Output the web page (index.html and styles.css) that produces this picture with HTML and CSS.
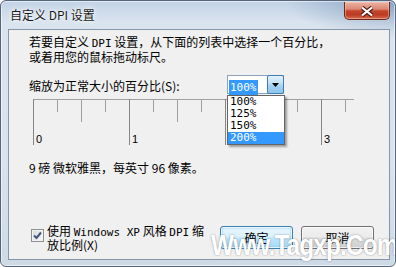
FILE: index.html
```html
<!DOCTYPE html>
<html lang="zh-CN">
<head>
    <meta charset="UTF-8">
    <meta name="viewport" content="width=device-width, initial-scale=1.0">
    <title>自定义 DPI 设置</title>
    <link rel="stylesheet" href="styles.css">
</head>
<body>

    <div class="window">
        <div class="titlebar">
            <span class="title">自定义 DPI 设置</span>
            <button class="close" aria-label="关闭">
                <svg class="close-x" viewBox="0 0 14 11" width="14" height="11">
                    <path class="x-edge" d="M2 1.5 L12 9.5 M12 1.5 L2 9.5"/>
                    <path class="x-fill" d="M2 1.5 L12 9.5 M12 1.5 L2 9.5"/>
                </svg>
            </button>
        </div>

        <div class="client">
            <p class="intro">若要自定义 <span class="en">DPI</span> 设置，从下面的列表中选择一个百分比，<br>或着用您的鼠标拖动标尺。</p>

            <div class="scale-row">
                <label class="scale-label">缩放为正常大小的百分比(S):</label>
                <div class="combo">
                    <span class="combo-value"><span class="sel">100%</span></span>
                    <span class="combo-btn">
                        <svg viewBox="0 0 7 4" width="7" height="4"><path d="M0 0 H7 L3.5 4 Z"/></svg>
                    </span>
                    <ul class="combo-list">
                        <li>100%</li>
                        <li>125%</li>
                        <li>150%</li>
                        <li class="active">200%</li>
                    </ul>
                </div>
            </div>

            <!-- ruler: 96px per inch, minor tick every 24px; "2" sits under the open list -->
            <svg class="ruler" width="322" height="46" viewBox="0 0 322 46">
                <g class="ruler-lines">
                    <path d="M0 0.5 H321"/>
                    <path class="major" d="M0.5 0 V46 M96.5 0 V46 M192.5 0 V46 M288.5 0 V46"/>
                    <path d="M48.5 0 V23 M144.5 0 V23 M240.5 0 V23"/>
                    <path d="M24.5 0 V13 M72.5 0 V13 M120.5 0 V13 M168.5 0 V13 M216.5 0 V13 M264.5 0 V13 M312.5 0 V13"/>
                </g>
                <g class="ruler-nums">
                    <text x="3" y="44">0</text>
                    <text x="99" y="44">1</text>
                    <text x="291" y="44">3</text>
                </g>
            </svg>

            <p class="font-info">9 磅 微软雅黑，每英寸 96 像素。</p>

            <div class="bottom-row">
                <label class="xp-check">
                    <span class="box">
                        <svg viewBox="0 0 11 11" width="11" height="11"><path d="M2 5.5 L4.5 8 L9 2.5"/></svg>
                    </span>
                    <span class="xp-text">使用 <span class="en">Windows XP</span> 风格 <span class="en">DPI</span> 缩<br>放比例(X)</span>
                </label>
                <div class="buttons">
                    <button class="btn default">确定</button>
                    <button class="btn">取消</button>
                </div>
            </div>
        </div>

        <div class="watermark">Www.Tagxp.Com</div>
    </div>

</body>
</html>
```

FILE: styles.css
```css
/* General Reset */
* {
    box-sizing: border-box;
}

body {
    margin: 0;
    width: 396px;
    height: 267px;
    overflow: hidden;
    background-color: #ffffff;
    font-family: "Noto Sans CJK SC", sans-serif;
    font-size: 12px;
    color: #000;
}

/* Window frame */
.window {
    position: relative;
    width: 396px;
    height: 267px;
    overflow: hidden;
    display: flex;
    flex-direction: column;
    padding: 0 5px 6px 7px;
    border: 1px solid #56657a;
    border-radius: 6px;
    background:
        radial-gradient(ellipse 110px 36px at 100% 0, rgba(60, 100, 150, 0.45), rgba(60, 100, 150, 0)),
        linear-gradient(#c2d3e6, #dae4ee 22px, #d9e3ed 60%, #cddae6);
    box-shadow: inset 0 0 0 1px rgba(255, 255, 255, 0.55);
}

.titlebar {
    display: flex;
    align-items: flex-start;
    height: 28px;
    padding-left: 2px;
}

.title {
    line-height: 28px;
    color: #1a1a1a;
    text-shadow: 0 0 6px #fff, 0 0 3px #fff;
}

.close {
    margin: 1px 0 0 auto;
    width: 46px;
    height: 18px;
    padding: 0;
    display: flex;
    align-items: center;
    justify-content: center;
    border: 1px solid #6b2a1e;
    border-top: none;
    border-radius: 0 0 5px 5px;
    background: linear-gradient(#ebb3a4 0%, #dc8773 42%, #c6462c 52%, #bb3b23 75%, #d86c4f 100%);
    box-shadow: inset 0 0 0 1px rgba(255, 210, 190, 0.45);
}

.close-x {
    margin-top: 1px;
}

.close-x .x-edge {
    stroke: #4a1c14;
    stroke-width: 4.2;
    fill: none;
}

.close-x .x-fill {
    stroke: #ffffff;
    stroke-width: 2.2;
    fill: none;
}

/* Client area */
.client {
    flex: 1;
    display: flex;
    flex-direction: column;
    padding: 5px 15px 8px 20px;
    background-color: #f0f0f0;
    border: 1px solid #8596a8;
}

.intro {
    margin: 0;
    line-height: 13px;
}

.en {
    font-family: "DejaVu Sans Mono", monospace;
    font-size: 11px;
}

.scale-row {
    display: flex;
    align-items: flex-end;
    height: 19px;
    margin-top: 12px;
}

.scale-label {
    flex: 0 0 198px;
    line-height: 14px;
    margin-bottom: 1px;
}

/* Combo box */
.combo {
    position: relative;
    display: flex;
    width: 57px;
    height: 19px;
    border: 1px solid #8ca2b8;
    background-color: #fff;
}

.combo-value {
    flex: 1;
    padding: 1px 0 0 1px;
}

.sel {
    display: inline-block;
    padding: 0 1px;
    line-height: 15px;
    background-color: #3399ff;
    color: #fff;
    font-family: "DejaVu Sans Mono", monospace;
    font-size: 11px;
}

.combo-btn {
    width: 17px;
    margin: -1px -1px -1px 0;
    display: flex;
    align-items: center;
    justify-content: center;
    border: 1px solid #3c7fb1;
    border-radius: 2px;
    background: linear-gradient(#e3f1fb, #bfe0f6 45%, #a5d2f2 55%, #8ec4ec);
}

.combo-btn svg {
    fill: #000;
}

.combo-list {
    position: absolute;
    top: 19px;
    left: -1px;
    width: 58px;
    margin: 0;
    padding: 0;
    list-style: none;
    background-color: #fff;
    border: 1px solid #646464;
    box-shadow: 2px 2px 2px rgba(0, 0, 0, 0.35);
    font-family: "DejaVu Sans Mono", monospace;
    font-size: 11px;
}

.combo-list li {
    height: 12px;
    line-height: 12px;
    padding-left: 2px;
}

.combo-list li.active {
    background-color: #3399ff;
    color: #fff;
}

/* Ruler */
.ruler {
    display: block;
    margin: 5px 0 0 4px;
}

.ruler-lines path {
    stroke: #a0a0a0;
    stroke-width: 1;
    fill: none;
}

.ruler-lines path.major {
    stroke: #858585;
}

.ruler-nums text {
    font-family: "Liberation Sans", sans-serif;
    font-size: 11px;
    fill: #000;
}

.font-info {
    margin: 16px 0 0;
    line-height: 13px;
}

/* Bottom row */
.bottom-row {
    display: flex;
    align-items: flex-start;
    margin-top: auto;
}

.xp-check {
    display: flex;
    align-items: flex-start;
    margin-left: 2px;
}

.box {
    width: 13px;
    height: 13px;
    margin-top: 3px;
    display: flex;
    align-items: center;
    justify-content: center;
    border: 1px solid #8e8f8f;
    background: linear-gradient(135deg, #d8d9da, #f8f8f8);
    box-shadow: inset 0 0 0 1px #f4f4f4;
}

.box path {
    stroke: #42567c;
    stroke-width: 2;
    fill: none;
}

.xp-text {
    margin: -1px 0 0 3px;
    line-height: 12px;
}

.buttons {
    display: flex;
    gap: 8px;
    margin-left: auto;
}

.btn {
    width: 73px;
    height: 23px;
    padding: 0;
    font-family: "Noto Sans CJK SC", sans-serif;
    font-size: 12px;
    color: #000;
    border: 1px solid #707070;
    border-radius: 3px;
    background: linear-gradient(#f2f2f2, #ebebeb 48%, #dddddd 52%, #cfcfcf);
    box-shadow: inset 0 0 0 1px rgba(255, 255, 255, 0.7);
}

.btn.default {
    border-color: #3c7fb1;
    background: linear-gradient(#eaf6fd, #d9f0fc 48%, #bee6fd 52%, #a7d9f5);
    box-shadow: inset 0 0 0 1px rgba(255, 255, 255, 0.8), inset 0 0 2px 1px #6fc4f0;
}

/* Site watermark over the dialog */
.watermark {
    position: absolute;
    left: 210px;
    top: 230px;
    font-family: "Liberation Sans", sans-serif;
    font-weight: bold;
    font-size: 29px;
    line-height: 1;
    letter-spacing: -1px;
    color: #fff;
    text-shadow: 0 0 2px rgba(0, 0, 0, 0.45);
    white-space: nowrap;
    transform: scaleX(0.84);
    transform-origin: left top;
}
```
